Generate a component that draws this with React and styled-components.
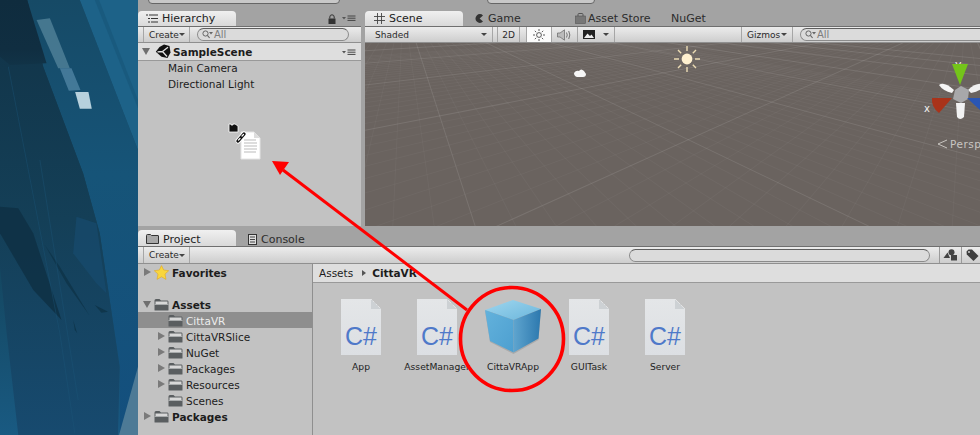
import React from "react";
import styled, { createGlobalStyle } from "styled-components";

const GlobalStyle = createGlobalStyle`
  html, body { margin: 0; padding: 0; background: #c2c2c2; }
  * { box-sizing: border-box; }
`;

const Page = styled.div`
  position: relative;
  display: flex;
  width: 980px;
  height: 435px;
  overflow: hidden;
  font-family: "DejaVu Sans", sans-serif;
  font-size: 11px;
  color: #1c1c1c;
`;

const Wallpaper = styled.svg`
  flex: none;
  width: 138px;
  height: 435px;
  display: block;
`;

const Editor = styled.div`
  flex: 1;
  min-width: 0;
  display: flex;
  flex-direction: column;
  background: #a3a3a3;
`;

const TopStrip = styled.div`
  flex: none;
  height: 10px;
  display: flex;
  overflow: hidden;
`;

const StripButton = styled.div`
  flex: none;
  width: ${(p) => p.$width}px;
  height: 14px;
  margin-top: -10px;
  margin-left: ${(p) => p.$left || 0}px;
  border: 1px solid #666;
  border-radius: 4px;
  background: #c8c8c8;
`;

const PanelsRow = styled.div`
  flex: none;
  height: 216px;
  display: flex;
  gap: 4px;
`;

const Panel = styled.section`
  display: flex;
  flex-direction: column;
  min-width: 0;
  width: ${(p) => (p.$width ? `${p.$width}px` : "auto")};
  flex: ${(p) => (p.$width ? "none" : 1)};
`;

const TabStrip = styled.div`
  flex: none;
  height: ${(p) => p.$height || 16}px;
  display: flex;
  align-items: flex-end;
  color: #222;
`;

const Tab = styled.div`
  flex: none;
  display: flex;
  align-items: center;
  gap: ${(p) => p.$gap || 4}px;
  width: ${(p) => p.$width}px;
  height: ${(p) => p.$h || 15}px;
  padding-left: ${(p) => p.$pad}px;
  padding-top: ${(p) => (p.$h ? 2 : 0)}px;
  font-size: 11px;
  white-space: nowrap;
  color: ${(p) => (p.$active ? "#222" : "#2c2c2c")};
  background: ${(p) => (p.$active ? "linear-gradient(#f0f0f0, #d9d9d9)" : "none")};
  border-radius: 4px 4px 0 0;
`;

const TabTools = styled.div`
  margin-left: auto;
  display: flex;
  align-items: center;
  gap: 6px;
  height: 15px;
  padding-right: 5px;
`;

const Toolbar = styled.div`
  flex: none;
  height: ${(p) => p.$height || 17}px;
  display: flex;
  align-items: stretch;
  padding-left: 5px;
  background: linear-gradient(#ececec, #cdcdcd);
  border-top: 1px solid #6f6f6f;
  border-bottom: 1px solid #8f8f8f;
  font-size: 9px;
  color: #2a2a2a;
`;

const ToolButton = styled.div`
  flex: none;
  display: flex;
  align-items: center;
  justify-content: ${(p) => (p.$center ? "center" : "space-between")};
  width: ${(p) => p.$width}px;
  margin-left: ${(p) => p.$left || 0}px;
  padding: ${(p) => (p.$center ? "0" : "0 5px")};
  border-right: 1px solid #a6a6a6;
  border-left: ${(p) => (p.$edge ? "1px solid #a6a6a6" : "none")};
  background: ${(p) => (p.$on ? "#fbfbfb" : "none")};
`;

const Caret = styled.span`
  width: 0;
  height: 0;
  border-left: 3px solid transparent;
  border-right: 3px solid transparent;
  border-top: 3px solid #444;
`;

const SearchBox = styled.div`
  flex: ${(p) => (p.$width ? "none" : 1)};
  display: flex;
  align-items: center;
  gap: 1px;
  width: ${(p) => (p.$width ? `${p.$width}px` : "auto")};
  height: 13px;
  align-self: center;
  margin-left: ${(p) => p.$left || 0}px;
  padding-left: 4px;
  border: 1px solid #8b8b8b;
  border-top-color: #5f5f5f;
  border-right-width: ${(p) => (p.$open ? 0 : 1)}px;
  border-radius: ${(p) => (p.$open ? "7px 0 0 7px" : "7px")};
  background: #dbdbdb;
  color: #7d7d7d;
  font-size: 10px;
`;

const SceneHeader = styled.div`
  flex: none;
  height: 18px;
  display: flex;
  align-items: center;
  padding: 0 5px;
  background: #dedede;
  border-bottom: 1px solid #999;
  font-weight: bold;
  font-size: 10.5px;
`;

const HeaderMenu = styled.span`
  margin-left: auto;
`;

const PanelBody = styled.div`
  flex: 1;
  min-height: 0;
  background: #c2c2c2;
`;

const PlainRow = styled.div`
  height: 16px;
  line-height: 15px;
  padding-left: 30px;
  font-size: 10.5px;
`;

const SceneView = styled.div`
  position: relative;
  flex: 1;
  min-height: 0;
  background: #6a635f;
  overflow: hidden;
`;

const GridSvg = styled.svg`
  display: block;
  width: 100%;
  height: 100%;
`;

const GizmoSvg = styled.svg`
  position: absolute;
  left: 0;
  top: 0;
  width: 615px;
  height: 182px;
`;

const PerspLabel = styled.span`
  position: absolute;
  left: 585px;
  top: 95px;
  color: #c9c6c3;
  font-size: 10.5px;
  letter-spacing: 0.5px;
`;

const ProjectPanel = styled.section`
  flex: 1;
  min-height: 0;
  display: flex;
  flex-direction: column;
`;

const ToolIcon = styled.div`
  flex: none;
  width: ${(p) => p.$width}px;
  margin-left: ${(p) => p.$left || 0}px;
  display: flex;
  align-items: center;
  justify-content: center;
  border-left: 1px solid #9a9a9a;
`;

const Split = styled.div`
  flex: 1;
  min-height: 0;
  display: flex;
  background: #c2c2c2;
`;

const Tree = styled.div`
  flex: none;
  width: 175px;
  border-right: 1px solid #8f8f8f;
`;

const TreeRow = styled.div`
  display: flex;
  align-items: center;
  height: 16px;
  padding-left: ${(p) => 6 + (p.$depth || 0) * 14}px;
  font-size: 10.5px;
  font-weight: ${(p) => (p.$bold ? "bold" : "normal")};
  color: ${(p) => (p.$selected ? "#ececec" : "#1c1c1c")};
  background: ${(p) => (p.$selected ? "#8e8e8e" : "none")};
`;

const ArrowSlot = styled.span`
  flex: none;
  width: 10px;
  display: flex;
  align-items: center;
`;

const Arrow = styled.span`
  width: 0;
  height: 0;
  ${(p) =>
    p.$open
      ? `border-left: 4px solid transparent;
         border-right: 4px solid transparent;
         border-top: 7px solid #6f6f6f;
         margin-left: -1px;`
      : `border-top: 4px solid transparent;
         border-bottom: 4px solid transparent;
         border-left: 7px solid #7a7a7a;`}
`;

const RowLabel = styled.span`
  margin-left: 3px;
  padding-top: 2px;
`;

const Browser = styled.div`
  flex: 1;
  min-width: 0;
  display: flex;
  flex-direction: column;
`;

const PathBar = styled.div`
  flex: none;
  height: 19px;
  display: flex;
  align-items: center;
  gap: 5px;
  padding-left: 6px;
  background: #dedede;
  border-bottom: 1px solid #999;
  font-size: 10.5px;
`;

const PathArrow = styled.span`
  width: 0;
  height: 0;
  margin: 0 1px 0 4px;
  border-top: 3px solid transparent;
  border-bottom: 3px solid transparent;
  border-left: 4px solid #555;
`;

const AssetGrid = styled.div`
  display: grid;
  grid-template-columns: repeat(5, 76px);
  padding: 14px 0 0 10px;
`;

const Asset = styled.div`
  display: flex;
  flex-direction: column;
  align-items: center;
  min-width: 0;
`;

const AssetThumb = styled.div`
  height: 58px;
  display: flex;
  align-items: flex-end;
  justify-content: center;
`;

const AssetName = styled.span`
  margin-top: 6px;
  font-size: 9.2px;
  white-space: nowrap;
  color: #222;
`;

const Doc = styled.div`
  position: relative;
  width: 40px;
  height: 56px;
  display: flex;
  justify-content: center;
  padding-top: 24px;
  background: linear-gradient(#e4e6e8, #dcdfe3);
  clip-path: polygon(0 0, 75% 0, 100% 18%, 100% 100%, 0 100%);
  color: #4f79c9;
  font-family: "Liberation Sans", sans-serif;
  font-size: 25px;
  line-height: 26px;
  &::after {
    content: "";
    position: absolute;
    right: 0;
    top: 0;
    width: 10px;
    height: 10px;
    background: linear-gradient(45deg, #cdd1d4 50%, #f1f2f3 50%);
  }
`;

const Overlay = styled.svg`
  position: absolute;
  left: 0;
  top: 0;
  width: 980px;
  height: 435px;
  pointer-events: none;
`;

// perspective grid of the scene view, fitted to the floor lines of the shot
const VP1 = [1800, -75];
const VP2 = [115, -110];
const ORIGIN = [650, 145];
const A = 0.02703;
const B = -0.03743;

const project = (u, v) => {
  const w = A * u + B * v + 1;
  return [
    (A * u * VP1[0] + B * v * VP2[0] + ORIGIN[0]) / w,
    (A * u * VP1[1] + B * v * VP2[1] + ORIGIN[1]) / w,
  ];
};

const gridLines = () => {
  const lines = [];
  for (let i = -40; i <= 60; i++) {
    const major = i % 10 === 0;
    if (Math.abs(i) > 25 && !major) continue;
    const a1 = project(120, i);
    const uMin = (0.03 - 1 - B * i) / A;
    const a2 = project(uMin, i);
    lines.push({ key: `v${i}`, p: [a1, a2], major });
    const b1 = project(i, -120);
    const vMin = (0.03 - 1 - A * i) / B;
    const b2 = project(i, vMin);
    lines.push({ key: `u${i}`, p: [b1, b2], major });
  }
  return lines;
};

const Folder = () => (
  <svg width="15" height="13" viewBox="0 0 15 13">
    <path d="M0.5 2.5 Q0.5 1 2 1 H5.5 L7 2.5 H13.5 Q14.5 2.5 14.5 4 V12 Q14.5 12.5 14 12.5 H1 Q0.5 12.5 0.5 12 Z" fill="#5a5e60" />
    <rect x="1.5" y="3.5" width="12" height="2.6" fill="#d8d8d8" />
    <rect x="0.5" y="6" width="14" height="1" fill="#a9acad" />
  </svg>
);

const Star = () => (
  <svg width="15" height="15" viewBox="0 0 15 15">
    <path d="M7.5 0.6 L9.7 5 L14.7 5.7 L11 9.1 L12 14.4 L7.5 11.8 L3 14.4 L4 9.1 L0.3 5.7 L5.3 5 Z" fill="#f9d63e" stroke="#e2a91e" strokeWidth="0.6" />
  </svg>
);

const Glass = () => (
  <svg width="11" height="9" viewBox="0 0 11 9">
    <circle cx="3.5" cy="3.5" r="2.6" fill="none" stroke="#666" strokeWidth="1" />
    <path d="M5.4 5.4 L7.6 8" stroke="#666" strokeWidth="1.1" />
    <path d="M7 2 H11 L9 4.6 Z" fill="#666" />
  </svg>
);

const MenuIcon = () => (
  <svg width="14" height="7" viewBox="0 0 14 7">
    <path d="M0 2 H4 L2 4.4 Z" fill="#555" />
    <path d="M5.5 1 H13.5 M5.5 3.2 H13.5 M5.5 5.4 H13.5" stroke="#444" strokeWidth="1" />
  </svg>
);

const LockIcon = () => (
  <svg width="8" height="10" viewBox="0 0 8 10">
    <path d="M1.8 4.5 V3 A2.2 2.2 0 0 1 6.2 3 V4.5" fill="none" stroke="#333" strokeWidth="1" />
    <rect x="0.5" y="4.5" width="7" height="5.5" fill="#333" />
  </svg>
);

const LogoBox = styled.svg`
  margin: 0 2px 0 5px;
`;

const UnityLogo = () => (
  <LogoBox width="16" height="15" viewBox="0 0 16 15">
    <path d="M9 0.5 L14.5 2 L15.5 8.5 L12.5 14 L6.5 12.8 L0.8 7.8 L4.5 3 Z" fill="#111" />
    <path d="M7.5 7.5 L13 3.2 M7.5 7.5 L12 12.5 M7.5 7.5 L2.5 7.8" stroke="#e4e4e4" strokeWidth="1.3" />
  </LogoBox>
);

const ListIcon = () => (
  <svg width="12" height="9" viewBox="0 0 12 9">
    <path d="M3 1 H12 M5 4.5 H12 M5 8 H12" stroke="#333" strokeWidth="1" />
    <path d="M0 1 H2 M2 4.5 H4 M2 8 H4" stroke="#333" strokeWidth="1" />
  </svg>
);

const GridIcon = () => (
  <svg width="11" height="11" viewBox="0 0 11 11">
    <path d="M3.5 0 V11 M7.5 0 V11 M0 3.5 H11 M0 7.5 H11" stroke="#444" strokeWidth="0.9" />
  </svg>
);

const GameIcon = () => (
  <svg width="9" height="9" viewBox="0 0 9 9">
    <path d="M8 1.4 A4.4 4.4 0 1 0 8 7.6 L4.6 4.5 Z" fill="#333" />
  </svg>
);

const StoreIcon = () => (
  <svg width="11" height="11" viewBox="0 0 11 11">
    <path d="M3 3 V1.5 Q3 0.5 4 0.5 H7 Q8 0.5 8 1.5 V3" fill="none" stroke="#555" strokeWidth="1" />
    <rect x="0.5" y="3" width="10" height="7.5" fill="#777" stroke="#555" strokeWidth="0.6" />
  </svg>
);

const ProjectIcon = () => (
  <svg width="13" height="10" viewBox="0 0 13 10">
    <path d="M0.5 1.5 Q0.5 0.5 1.5 0.5 H4.5 L5.5 1.5 H12 Q12.5 1.5 12.5 2 V9.5 H0.5 Z" fill="#a8a8a8" stroke="#333" strokeWidth="1" />
  </svg>
);

const ConsoleIcon = () => (
  <svg width="9" height="11" viewBox="0 0 9 11">
    <rect x="0.5" y="0.5" width="8" height="10" fill="#ddd" stroke="#333" strokeWidth="1" />
    <path d="M2 3 H7 M2 5.5 H7 M2 8 H7" stroke="#333" strokeWidth="0.9" />
  </svg>
);

const SunToolIcon = () => (
  <svg width="12" height="12" viewBox="0 0 12 12">
    <circle cx="6" cy="6" r="2.4" fill="none" stroke="#333" strokeWidth="0.8" />
    <path d="M6 0 V2 M6 10 V12 M0 6 H2 M10 6 H12 M1.8 1.8 L3.2 3.2 M8.8 8.8 L10.2 10.2 M1.8 10.2 L3.2 8.8 M8.8 3.2 L10.2 1.8" stroke="#333" strokeWidth="0.8" />
  </svg>
);

const SoundIcon = () => (
  <svg width="15" height="12" viewBox="0 0 15 12">
    <path d="M0.5 4 H3 L7.5 0.8 V11.2 L3 8 H0.5 Z" fill="#bbb" stroke="#666" strokeWidth="0.7" />
    <path d="M9.5 3.5 Q11 6 9.5 8.5 M11.7 2 Q14 6 11.7 10" fill="none" stroke="#666" strokeWidth="0.9" />
  </svg>
);

const ImageIcon = () => (
  <svg width="12" height="9" viewBox="0 0 12 9">
    <rect x="0" y="0" width="12" height="9" fill="#222" />
    <path d="M1 8 L4.5 3.5 L7 6 L8.5 4.5 L11 8 Z" fill="#eee" />
  </svg>
);

const FilterIcon = () => (
  <svg width="15" height="12" viewBox="0 0 15 12">
    <circle cx="8.5" cy="3.2" r="3" fill="#444" />
    <path d="M0.5 9 L4.5 3.5 L7 9 Z" fill="#444" />
    <rect x="8" y="6" width="6" height="5.5" fill="#444" />
  </svg>
);

const TagIcon = () => (
  <svg width="13" height="13" viewBox="0 0 13 13">
    <path d="M0.5 2.5 L2.5 0.5 H6 L12.5 7 L7.5 12 L0.8 5.5 Z" fill="#3d3d3d" />
    <circle cx="3" cy="3" r="0.9" fill="#ddd" />
  </svg>
);

const CubeIcon = () => (
  <svg width="60" height="56" viewBox="0 0 60 56">
    <defs>
      <linearGradient id="cubeTop" x1="0" y1="0" x2="1" y2="1">
        <stop offset="0" stopColor="#9fd6ee" />
        <stop offset="1" stopColor="#6bb6dc" />
      </linearGradient>
      <linearGradient id="cubeLeft" x1="0" y1="0" x2="1" y2="1">
        <stop offset="0" stopColor="#63b2dc" />
        <stop offset="1" stopColor="#4d9fd0" />
      </linearGradient>
      <linearGradient id="cubeRight" x1="0" y1="0" x2="1" y2="0">
        <stop offset="0" stopColor="#5fa5cf" />
        <stop offset="1" stopColor="#2c78ae" />
      </linearGradient>
    </defs>
    <path d="M30 1 L2 11 L7 42 L30.5 54 L55.5 40 L58 10 Z" fill="#000" opacity="0.12" transform="translate(0 1)" />
    <path d="M30 1 L2 11 L30.5 21 L58 10 Z" fill="url(#cubeTop)" />
    <path d="M2 11 L30.5 21 V53.5 L7 42 Z" fill="url(#cubeLeft)" />
    <path d="M58 10 L30.5 21 V53.5 L55.5 39.5 Z" fill="url(#cubeRight)" />
  </svg>
);

const CsFile = () => <Doc>C#</Doc>;

const assets = [
  { name: "App" },
  { name: "AssetManager" },
  { name: "CittaVRApp", cube: true },
  { name: "GUITask" },
  { name: "Server" },
];

const folders = [
  { name: "CittaVR", selected: true },
  { name: "CittaVRSlice", arrow: true },
  { name: "NuGet", arrow: true },
  { name: "Packages", arrow: true },
  { name: "Resources", arrow: true },
  { name: "Scenes" },
];

const App = () => (
  <Page>
    <GlobalStyle />
    <Wallpaper viewBox="0 0 415 1305" preserveAspectRatio="none">
      <defs>
        <linearGradient id="wallBase" x1="0" y1="0" x2="0" y2="1">
          <stop offset="0" stopColor="#123a50" />
          <stop offset="0.6" stopColor="#14465f" />
          <stop offset="1" stopColor="#195a82" />
        </linearGradient>
        <linearGradient id="wallBody" x1="0" y1="0" x2="0" y2="1">
          <stop offset="0" stopColor="#113347" />
          <stop offset="0.5" stopColor="#143f57" />
          <stop offset="1" stopColor="#174a6f" />
        </linearGradient>
        <linearGradient id="wallSide" x1="0" y1="0" x2="0" y2="1">
          <stop offset="0" stopColor="#164a66" />
          <stop offset="0.4" stopColor="#165478" />
          <stop offset="1" stopColor="#134f7e" />
        </linearGradient>
        <linearGradient id="wallCorner" x1="0" y1="0" x2="0" y2="1">
          <stop offset="0" stopColor="#0f2c3e" />
          <stop offset="0.75" stopColor="#102e41" />
          <stop offset="1" stopColor="#113347" />
        </linearGradient>
      </defs>
      <rect width="415" height="1305" fill="url(#wallBase)" />
      <polygon points="80,0 240,0 415,450 415,1305 360,1305 360,1100 300,700 250,520 130,200" fill="url(#wallSide)" />
      <polygon points="240,0 415,0 415,450" fill="#1d6288" />
      <polygon points="285,0 298,0 415,300 415,325" fill="#195a7e" />
      <polygon points="82,0 130,200 250,520 300,700 360,1100 355,1305 55,1305 20,1000 0,800 0,0" fill="url(#wallBody)" />
      <polygon points="0,0 82,0 140,190 30,195 0,170" fill="url(#wallCorner)" />
      <polygon points="0,620 55,625 100,700 185,960 100,870 0,700" fill="#0e3044" opacity="0.85" />
      <polygon points="135,735 180,800 268,945 200,850" fill="#0f364c" />
      <polygon points="285,915 325,935 305,938" fill="#0f364c" />
      <polygon points="220,960 232,1000 225,990" fill="#0f364c" />
      <polygon points="230,650 290,670 320,880 290,850 220,760" fill="#174d72" opacity="0.6" />
      <polygon points="110,60 150,55 210,205 175,205" fill="#55859c" opacity="0.75" />
      <polygon points="180,205 215,205 242,270 207,272" fill="#4b80a0" opacity="0.85" />
      <polygon points="226,276 266,276 276,326 240,326" fill="#b7d1dd" />
      <polygon points="415,1100 415,1305 358,1305" fill="#4d7a96" />
      <path d="M25 200 L180 1000 L225 1300 M120 480 L235 1200" stroke="#1c5678" strokeWidth="2" fill="none" opacity="0.6" />
    </Wallpaper>

    <Editor>
      <TopStrip>
        <StripButton $width={192} $left={10} />
        <StripButton $width={108} $left={147} />
        <StripButton $width={77} $left={393} />
        <StripButton $width={14} $left={11} />
      </TopStrip>

      <PanelsRow>
        <Panel $width={223}>
          <TabStrip $height={16}>
            <Tab $active $width={98} $pad={8}>
              <ListIcon />
              Hierarchy
            </Tab>
            <TabTools>
              <LockIcon />
              <MenuIcon />
            </TabTools>
          </TabStrip>
          <Toolbar>
            <ToolButton $width={47} $edge>
              Create <Caret />
            </ToolButton>
            <SearchBox $width={152} $left={7}>
              <Glass />
              All
            </SearchBox>
          </Toolbar>
          <SceneHeader>
            <Arrow $open />
            <UnityLogo />
            SampleScene
            <HeaderMenu>
              <MenuIcon />
            </HeaderMenu>
          </SceneHeader>
          <PanelBody>
            <PlainRow>Main Camera</PlainRow>
            <PlainRow>Directional Light</PlainRow>
          </PanelBody>
        </Panel>

        <Panel>
          <TabStrip $height={16}>
            <Tab $active $width={98} $pad={9}>
              <GridIcon />
              Scene
            </Tab>
            <Tab $width={100} $pad={12}>
              <GameIcon />
              Game
            </Tab>
            <Tab $width={108} $pad={12} $gap={2}>
              <StoreIcon />
              Asset Store
            </Tab>
            <Tab $width={70} $pad={0}>NuGet</Tab>
          </TabStrip>
          <Toolbar>
            <ToolButton $width={123}>
              Shaded <Caret />
            </ToolButton>
            <ToolButton $center $width={23} $left={4} $edge>
              2D
            </ToolButton>
            <ToolButton $center $on $width={26} $left={6} $edge>
              <SunToolIcon />
            </ToolButton>
            <ToolButton $center $width={26}>
              <SoundIcon />
            </ToolButton>
            <ToolButton $width={37}>
              <ImageIcon />
              <Caret />
            </ToolButton>
            <ToolButton $width={52} $left={126} $edge>
              Gizmos <Caret />
            </ToolButton>
            <SearchBox $left={7} $open>
              <Glass />
              All
            </SearchBox>
          </Toolbar>
          <SceneView>
            <GridSvg viewBox="0 9 1845 546" preserveAspectRatio="none">
              {gridLines().map((l) => (
                <line
                  key={l.key}
                  x1={l.p[0][0]}
                  y1={l.p[0][1]}
                  x2={l.p[1][0]}
                  y2={l.p[1][1]}
                  stroke="#fff"
                  strokeOpacity={l.major ? 0.1 : 0.035}
                  strokeWidth="3"
                />
              ))}
            </GridSvg>
            <GizmoSvg viewBox="0 0 615 182">
              <g transform="translate(322 16)" stroke="#ecdcb4" strokeWidth="1.4">
                <path d="M0 -13 V-8 M0 8 V13 M-13 0 H-8 M8 0 H13 M-9 -9 L-5.8 -5.8 M9 9 L5.8 5.8 M-9 9 L-5.8 5.8 M9 -9 L5.8 -5.8" />
                <circle r="5.4" fill="#fff0cf" stroke="none" />
              </g>
              <path d="M209 30 Q211 27 214 28 Q216 25 219 28 L221 31 Q221 34 218 34 L212 34 Q209 33 209 30 Z" fill="#f6f6f6" />
              <text x="590" y="25" fill="#f2f2f2" fontSize="11" fontFamily="DejaVu Sans">y</text>
              <text x="559" y="69" fill="#f2f2f2" fontSize="10" fontFamily="DejaVu Sans">x</text>
              <path d="M587 21 H603 L595 42 Z" fill="#74c41a" />
              <path d="M574 42 Q579 38 589 47 L587 50 Q578 48 574 42 Z" fill="#f5f5f5" />
              <path d="M603 47 Q612 38 620 42 Q616 48 606 50 Z" fill="#f0f0f0" />
              <path d="M591 60 H600 L599 74 Q595 78 592 74 Z" fill="#f2f2f2" />
              <path d="M590 47 L596 43 L604 47 L603 56 L596 60 L588 56 Z" fill="#a8a8aa" />
              <path d="M567 55 H587 L574 70 Q566 64 567 55 Z" fill="#a9331a" />
              <path d="M602 55 H615 V67 Z" fill="#2a56b4" />
              <path d="M582 97 L573 101 L582 105" fill="none" stroke="#d2cfcb" strokeWidth="0.9" />
            </GizmoSvg>
            <PerspLabel>Persp</PerspLabel>
          </SceneView>
        </Panel>
      </PanelsRow>

      <ProjectPanel>
        <TabStrip $height={20}>
          <Tab $active $width={98} $h={16} $pad={8}>
            <ProjectIcon />
            Project
          </Tab>
          <Tab $width={100} $h={16} $pad={12}>
            <ConsoleIcon />
            Console
          </Tab>
        </TabStrip>
        <Toolbar $height={18}>
          <ToolButton $width={47} $edge>
            Create <Caret />
          </ToolButton>
          <SearchBox $width={301} $left={439} />
          <ToolIcon $width={22} $left={9}>
            <FilterIcon />
          </ToolIcon>
          <ToolIcon $width={22}>
            <TagIcon />
          </ToolIcon>
        </Toolbar>
        <Split>
          <Tree>
            <TreeRow $bold>
              <ArrowSlot>
                <Arrow />
              </ArrowSlot>
              <Star />
              <RowLabel>Favorites</RowLabel>
            </TreeRow>
            <TreeRow />
            <TreeRow $bold>
              <ArrowSlot>
                <Arrow $open />
              </ArrowSlot>
              <Folder />
              <RowLabel>Assets</RowLabel>
            </TreeRow>
            {folders.map((f) => (
              <TreeRow key={f.name} $depth={1} $selected={f.selected}>
                <ArrowSlot>{f.arrow && <Arrow />}</ArrowSlot>
                <Folder />
                <RowLabel>{f.name}</RowLabel>
              </TreeRow>
            ))}
            <TreeRow $bold>
              <ArrowSlot>
                <Arrow />
              </ArrowSlot>
              <Folder />
              <RowLabel>Packages</RowLabel>
            </TreeRow>
          </Tree>
          <Browser>
            <PathBar>
              Assets <PathArrow /> <b>CittaVR</b>
            </PathBar>
            <AssetGrid>
              {assets.map((a) => (
                <Asset key={a.name}>
                  <AssetThumb>{a.cube ? <CubeIcon /> : <CsFile />}</AssetThumb>
                  <AssetName>{a.name}</AssetName>
                </Asset>
              ))}
            </AssetGrid>
          </Browser>
        </Split>
      </ProjectPanel>
    </Editor>

    <Overlay viewBox="0 0 980 435">
      {/* dragged file */}
      <path d="M241 132 H254 L260 138 V159 H241 Z" fill="#fff" stroke="#e4e4e4" />
      <path d="M254 132 V138 H260" fill="#ddd" />
      <path d="M244 140 H256 M244 143 H257 M244 146 H257 M244 149 H257 M244 152 H256" stroke="#bbb" />
      <path d="M229 124 H231 V125 H233 V124 H235 L238 126 V132 H229 Z" fill="#111" stroke="#fff" strokeWidth="0.8" />
      <path d="M238 141 L244 134" stroke="#fff" strokeWidth="5" strokeLinecap="round" />
      <path d="M238 141 L244 134" stroke="#111" strokeWidth="3.4" strokeLinecap="round" />
      <path d="M238.5 140 L240 138.5 M242 136 L243.5 134.5" stroke="#fff" strokeWidth="1.2" strokeLinecap="round" />
      {/* red annotation */}
      <line x1="283" y1="170" x2="467" y2="310" stroke="#f00" strokeWidth="3" />
      <polygon points="272,161 289,162 280,175" fill="#f00" />
      <circle cx="512" cy="339" r="51.5" fill="none" stroke="#f00" strokeWidth="3.6" />
    </Overlay>
  </Page>
);

export default App;
